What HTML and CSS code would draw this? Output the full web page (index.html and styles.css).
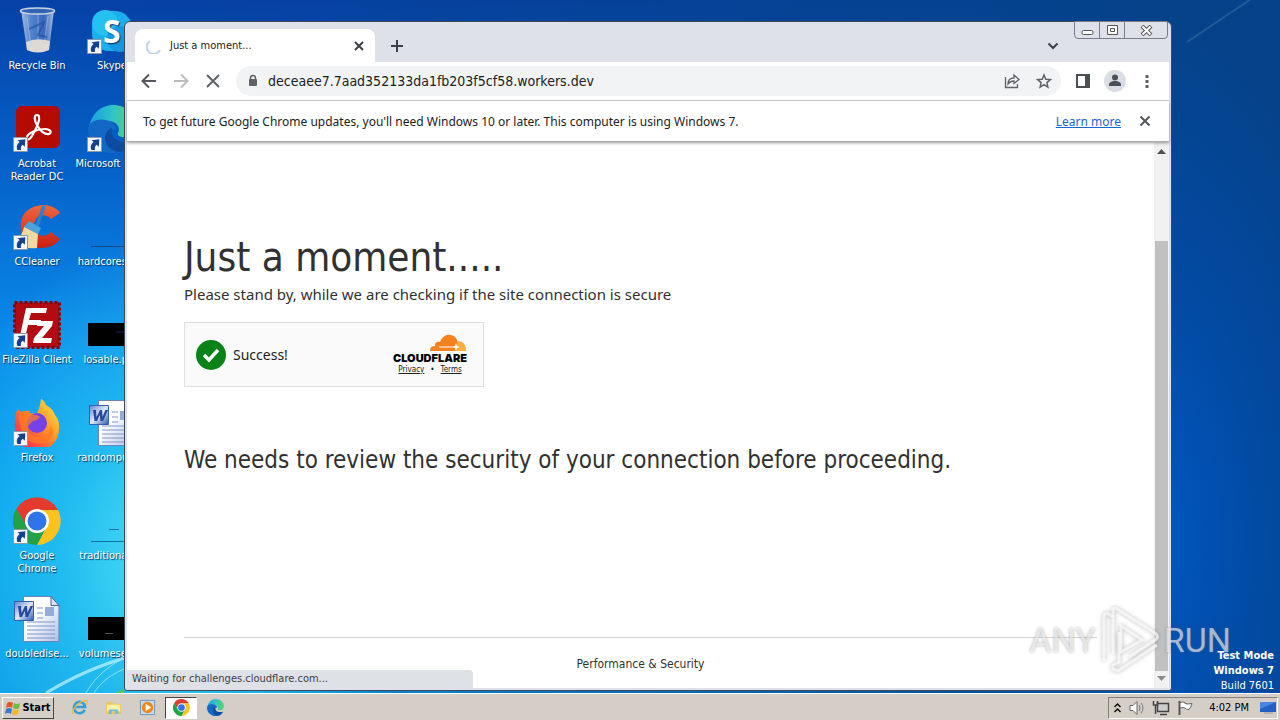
FILE: index.html
```
<!DOCTYPE html>
<html lang="en">
<head>
    <meta charset="UTF-8">
    <meta name="viewport" content="width=device-width, initial-scale=1.0">
    <title>Just a moment...</title>
    <link rel="stylesheet" href="styles.css">
</head>
<body>
    <svg width="0" height="0" class="defs" aria-hidden="true">
        <defs>
            <linearGradient id="bin-glass" x1="0" x2="1"><stop offset="0" stop-color="#b9cbe6"/><stop offset=".3" stop-color="#5c8ad0"/><stop offset=".7" stop-color="#3c6cc0"/><stop offset="1" stop-color="#bccbe2"/></linearGradient>
            <linearGradient id="page-fade" x1="0" y1="0" x2="1" y2="1"><stop offset=".4" stop-color="#fff"/><stop offset="1" stop-color="#aebde4"/></linearGradient>
            <linearGradient id="word-blue" x1="0" y1="0" x2="1" y2="1"><stop offset="0" stop-color="#5f86d2"/><stop offset=".5" stop-color="#dfe8fa"/><stop offset="1" stop-color="#3157ab"/></linearGradient>
            <linearGradient id="edge-top" x1="0" x2="1"><stop offset="0" stop-color="#1b9de0"/><stop offset=".5" stop-color="#2fc3c9"/><stop offset="1" stop-color="#5fd563"/></linearGradient>
            <linearGradient id="fox" x1="1" y1="0" x2="0" y2="1"><stop offset="0" stop-color="#fff04a"/><stop offset=".4" stop-color="#ff9a26"/><stop offset=".75" stop-color="#ff4146"/><stop offset="1" stop-color="#e31c8a"/></linearGradient>
            <linearGradient id="cc-red" x1="0" y1="0" x2="0" y2="1"><stop offset="0" stop-color="#f0663f"/><stop offset="1" stop-color="#c91f14"/></linearGradient>
            <symbol id="shortcut" viewBox="0 0 16 16"><path d="M.5.5h14v14H.5z" fill="#f2f5fa" stroke="#8d97a6"/><path d="M4.500 3.200l7.800-.9-.5 7.500-2-2C8 9 7.500 10.500 8 13H4.500C3 10 4 7 6.700 5z" fill="#15408e"/></symbol>
            <symbol id="chrome" viewBox="0 0 48 48"><path d="M24 13h21a24 24 0 0 0-41.800-1L14 30z" fill="#e33b2e"/><path d="M33.500 29.500L24 48a24 24 0 0 0 21-35H24z" fill="#fcc31e"/><path d="M14.500 29.500L3.200 12A24 24 0 0 0 24 48l9.500-18.500z" fill="#24a048"/><circle cx="24" cy="24" r="12" fill="#fff"/><circle cx="24" cy="24" r="9.500" fill="#2f74ea"/></symbol>
            <symbol id="edge" viewBox="0 0 48 48"><path d="M1 23C3 9 13 0 25 0c13 0 23 9 23 20 0 8-6 12-12 12-5 0-7-2-6-4 3-5-1-12-10-12S4 19 1 23z" fill="url(#edge-top)"/><path d="M0 25c0-8 9-12 18-10 7 1.500 11 6 11 10-5-2-10 2-10 8 0 8 8 13 15 14C18 53 0 42 0 25z" fill="#1268c4"/><path d="M17 33c0-5 3-9 7-10-2 7 3 14 13 14 4 0 7-1 9-2-4 8-10 12-15 12-8-1-14-7-14-14z" fill="#0c4ba0"/></symbol>
            <symbol id="word" viewBox="0 0 48 48"><path d="M10.500 1.500H38l8 9v36H10.500z" fill="url(#page-fade)" stroke="#6d83bb"/><path d="M38 1.500v9h8z" fill="#dbe5fa" stroke="#48619f"/><path d="M24 13h6M24 18h6M24 23h6M14 27h28M14 31h28M14 35h28M14 39h28M14 43h28" stroke="#7f96c9"/><path d="M32 12h9v9h-9z" fill="#96abd6"/><path d="M1.500 6.500h19v19h-19z" fill="url(#word-blue)" stroke="#385db1"/><path d="M5 11h3l.5 7 3.500-7h2l.5 7 3-7h2.500l-5 11h-2.500l-.7-6-2.800 6H6.500z" fill="#254a9c"/></symbol>
        </defs>
    </svg>

    <main class="desktop">
        <svg class="streaks" viewBox="0 0 200 100" aria-hidden="true">
            <path d="M46 100C76 82 100 72 140 60" stroke="#b9f3ff" stroke-width="3" opacity=".75"/>
            <path d="M86 100C94 86 104 76 128 62M94 100C100 90 110 82 124 76" stroke="#a5edfb" stroke-width="1" opacity=".8"/>
            <path d="M116 100l8-5v5z" fill="#54c660"/>
        </svg>
        <svg class="rays" viewBox="0 0 108 300" aria-hidden="true"><path d="M15 42L82-3" stroke="#8fb4d6" stroke-width="2" opacity=".2"/></svg>

        <div class="shortcuts">
            <a class="shortcut" href="#">
                <svg viewBox="0 0 48 48"><path d="M8 3l6 40q10 5 22 0l5-40z" fill="url(#bin-glass)" opacity=".9"/><path d="M13 35q11-5 24-1l-1 9q-11 5-22 0z" fill="#ded9d2"/><path d="M14 10l4 30M25 8v30M35 9l-4 30" stroke="#c4d8f2" opacity=".45"/><path d="M16 22l15-7-6 13 9 2" fill="none" stroke="#204c9f" stroke-width="2" opacity=".6"/><ellipse cx="24.500" cy="4" rx="17" ry="3" fill="#3164b8" stroke="#c9d3dd" stroke-width="1.500"/></svg>
                <span>Recycle Bin</span>
            </a>
            <a class="shortcut" href="#">
                <svg viewBox="0 0 48 48"><rect x="4" y="4" width="40" height="40" rx="17" fill="#1bb0ed"/><circle cx="17" cy="16" r="13" fill="#25c1f1"/><circle cx="32" cy="32" r="13" fill="#1598df"/><text x="15" y="36" class="skype-s">S</text></svg>
                <svg class="arrow"><use href="#shortcut"/></svg>
                <span>Skype</span>
            </a>
            <a class="shortcut" href="#">
                <svg viewBox="0 0 48 48"><rect x="3" y="1" width="44" height="42" rx="6" fill="#b30b00"/><path d="M24 10c-3 0-3 5 0 10 3 6 8 10 12 9 3-1 2-5-4-5-8 0-17 4-18 8-1 3 2 4 5-1 4-7 8-16 7-19 0-1-1-2-2-2z" fill="none" stroke="#fff" stroke-width="2.200"/></svg>
                <svg class="arrow"><use href="#shortcut"/></svg>
                <span>Acrobat Reader DC</span>
            </a>
            <a class="shortcut" href="#">
                <svg><use href="#edge"/></svg>
                <svg class="arrow"><use href="#shortcut"/></svg>
                <span>Microsoft Edge</span>
            </a>
            <a class="shortcut" href="#">
                <svg viewBox="0 0 48 48"><path d="M47 10C40-1 18-1 10 13c-7 15 2 32 18 32 9 0 16-4 19-9l-9-7c-6 7-17 4-17-6 0-11 11-14 17-7z" fill="url(#cc-red)"/><path d="M31 3l-7 20" stroke="#2f80c8" stroke-width="3.500"/><path d="M16 18l12 7-3 6-14-7z" fill="#47a4dc"/><path d="M11 24l14 7-1 14q-14 2-21-7 6-5 8-14z" fill="#f0d9a2"/></svg>
                <svg class="arrow"><use href="#shortcut"/></svg>
                <span>CCleaner</span>
            </a>
            <a class="shortcut" href="#">
                <svg viewBox="0 0 48 48"><path d="M3 43.500h45" stroke="#084a8b"/></svg>
                <span>hardcoreset...</span>
            </a>
            <a class="shortcut" href="#">
                <svg viewBox="0 0 48 48"><rect x="1.500" y="1.500" width="45" height="45" fill="#b20b12" stroke="#7e0710" stroke-width="3" stroke-dasharray="3 2"/><path d="M13 7h21l-1 5H18l-2 7h12l-1 5H15l-3 13H6.500z" fill="#fff"/><path d="M25 20h15l-1 5-10 12h10l-1 5H20l1-5 10-12h-7z" fill="#fff"/></svg>
                <svg class="arrow"><use href="#shortcut"/></svg>
                <span>FileZilla Client</span>
            </a>
            <a class="shortcut" href="#">
                <svg viewBox="0 0 48 48"><path d="M0 22h48v23H0z"/><path d="M28 31h12" stroke="#20205c"/></svg>
                <span>losable.png</span>
            </a>
            <a class="shortcut" href="#">
                <svg viewBox="0 0 48 48"><path d="M5 9q0 3 4 4 4-2 8-1-2 2 0 3 3-1 7-1 3-5 4-14 3 1 5 6 7 4 9 10 5 6 4 14a22 22 0 0 1-44 0Q1 16 5 9z" fill="url(#fox)"/><circle cx="24" cy="24" r="10" fill="#7542e5"/><path d="M6 13q9-2 15 3 5 0 6 2-2 3-7 4-5 4-5 6-1 8 9 10 12 1 14-11 5 8-3 15-9 6-20-1-8-8-9-22z" fill="#ff7b24" opacity=".75"/></svg>
                <svg class="arrow"><use href="#shortcut"/></svg>
                <span>Firefox</span>
            </a>
            <a class="shortcut" href="#">
                <svg><use href="#word"/></svg>
                <span>randomputs...</span>
            </a>
            <a class="shortcut" href="#">
                <svg><use href="#chrome"/></svg>
                <svg class="arrow"><use href="#shortcut"/></svg>
                <span>Google Chrome</span>
            </a>
            <a class="shortcut" href="#">
                <svg viewBox="0 0 48 48"><path d="M3 44.500h45M21 32.500h10" stroke="#126f9d"/></svg>
                <span>traditionals...</span>
            </a>
            <a class="shortcut" href="#">
                <svg><use href="#word"/></svg>
                <span>doubledise...</span>
            </a>
            <a class="shortcut" href="#">
                <svg viewBox="0 0 48 48"><path d="M0 22h48v23H0z"/><path d="M17 38.500h8" stroke="#555"/></svg>
                <span>volumesets...</span>
            </a>
        </div>

        <section class="window">
            <div class="window-buttons">
                <button aria-label="Minimize"><svg width="13" height="11"><rect x="1" y="5.500" width="11" height="4" rx="1.500" fill="#fff" stroke="#555"/></svg></button>
                <button aria-label="Maximize"><svg width="13" height="11"><path d="M1.500.5h10v9h-10zM4.500 3.500h4v3h-4z" fill="#fff" stroke="#555"/></svg></button>
                <button aria-label="Close"><svg width="13" height="11"><path d="M2 1l9 9M11 1l-9 9" stroke="#555" stroke-width="4"/><path d="M2.500 1.500l8 8M10.500 1.500l-8 8" stroke="#fff" stroke-width="2"/></svg></button>
            </div>

            <div class="tabs">
                <div class="tab">
                    <svg width="16" height="16"><path d="M4 3A7 7 0 1 0 14 12" fill="none" stroke="#c3d3ec" stroke-width="2"/></svg>
                    <span>Just a moment...</span>
                    <button aria-label="Close tab"><svg width="10" height="10"><path d="M1 1l8 8M9 1l-8 8" stroke="#3c4043" stroke-width="2"/></svg></button>
                </div>
                <button class="new-tab" aria-label="New tab"><svg width="12" height="12"><path d="M6 0v12M0 6h12" stroke="#3c4043" stroke-width="2"/></svg></button>
                <button class="tab-search" aria-label="Search tabs"><svg width="12" height="8"><path d="M1.500 1.500L6 6l4.500-4.500" fill="none" stroke="#3c4043" stroke-width="2"/></svg></button>
            </div>

            <div class="toolbar">
                <button aria-label="Back"><svg width="16" height="16"><path d="M15 8H2M8 1.500L1.500 8 8 14.500" fill="none" stroke="#54575b" stroke-width="2"/></svg></button>
                <button aria-label="Forward"><svg width="16" height="16"><path d="M1 8h13M8 1.500L14.500 8 8 14.500" fill="none" stroke="#babcbe" stroke-width="2"/></svg></button>
                <button aria-label="Stop"><svg width="16" height="16"><path d="M2 2l12 12M14 2L2 14" stroke="#5f6368" stroke-width="2"/></svg></button>
                <div class="omnibox">
                    <svg width="10" height="14"><path d="M2.500 6V4a2.500 2.500 0 0 1 5 0v2" fill="none" stroke="#5f6368" stroke-width="1.500"/><rect x="1" y="5" width="8" height="7" rx="1" fill="#5f6368"/></svg>
                    <input type="text" aria-label="Address" value="deceaee7.7aad352133da1fb203f5cf58.workers.dev">
                    <button aria-label="Share"><svg width="16" height="16"><path d="M1.500 4v10.500h12V11M4 11c0-4 2-6 6-6V2l5 4.500-5 4V8c-3 0-4.500 1-6 3z" fill="none" stroke="#5f6368" stroke-width="1.300"/></svg></button>
                    <button aria-label="Bookmark"><svg width="16" height="16"><path d="M8 2l1.800 4.200 4.600.4-3.500 3 1 4.500L8 11.700l-3.900 2.400 1-4.500-3.500-3 4.600-.4z" fill="none" stroke="#5f6368" stroke-width="1.500"/></svg></button>
                </div>
                <button aria-label="Side panel"><svg width="14" height="14"><path d="M1 1h12v12H1z" fill="none" stroke="#4b4e52" stroke-width="2"/><path d="M9 0h5v14H9z" fill="#4b4e52"/></svg></button>
                <button aria-label="Profile"><svg width="22" height="22"><circle cx="11" cy="11" r="11" fill="#dadde4"/><circle cx="11" cy="7.500" r="3" fill="#4a4f58"/><path d="M5 16v-1.500c0-2 3-3.500 6-3.500s6 1.500 6 3.500V16z" fill="#4a4f58"/></svg></button>
                <button aria-label="Menu"><svg width="4" height="14"><path d="M.5 1h3v3h-3zM.5 6h3v3h-3zM.5 11h3v3h-3z" fill="#5f6368"/></svg></button>
            </div>

            <div class="infobar">
                <p>To get future Google Chrome updates, you'll need Windows 10 or later. This computer is using Windows 7.</p>
                <a href="#">Learn more</a>
                <button aria-label="Dismiss"><svg width="12" height="12"><path d="M1.500 1.500l9 9M10.500 1.500l-9 9" stroke="#54575b" stroke-width="2"/></svg></button>
            </div>

            <div class="viewport">
                <div class="page">
                    <h1>Just a moment.....</h1>
                    <p class="lead">Please stand by, while we are checking if the site connection is secure</p>
                    <div class="challenge">
                        <svg width="30" height="30"><circle cx="15" cy="15" r="15" fill="#078318"/><path d="M8 15l5 5 9-10" fill="none" stroke="#fff" stroke-width="3.500"/></svg>
                        <span class="success">Success!</span>
                        <div class="brand">
                            <svg width="38" height="18" viewBox="0 0 38 18"><path d="M1 17q0-5 5-5 0-5 5-4c2-5 6-8 10-7 5 0 7 4 8 8l-2 8z" fill="#f6821f"/><path d="M29 7q8 0 8 10H26z" fill="#fbad41"/><path d="M10 13h18" stroke="#fff"/><path d="M27 9l1 3 3 1-3 1-1 3-1-3-2-1 2-1z" fill="#fff"/></svg>
                            <strong>CLOUDFLARE</strong>
                            <div class="terms"><a href="#">Privacy</a><span>•</span><a href="#">Terms</a></div>
                        </div>
                    </div>
                    <h2>We needs to review the security of your connection before proceeding.</h2>
                    <footer>Performance &amp; Security</footer>
                </div>
                <div class="scrollbar">
                    <svg width="9" height="5"><path d="M0 5l4.500-5L9 5z" fill="#505050"/></svg>
                    <div class="thumb"></div>
                    <svg width="9" height="5"><path d="M0 0l4.500 5L9 0z" fill="#8b8b8b"/></svg>
                </div>
                <div class="status">Waiting for challenges.cloudflare.com...</div>
            </div>
        </section>

        <div class="watermark">
            <span>ANY</span>
            <svg width="62" height="66" viewBox="0 0 62 66"><path d="M5 54V10q0-5 5-3l4 3v37"/><path d="M14 10V3q0-3 4-1l38 24q5 4 0 7L30 50"/><path d="M20 25v30l-6 3v4l5 2 39-26"/><path d="M22 19v26l21-12z"/></svg>
            <span>RUN</span>
        </div>
        <div class="build"><b>Test Mode</b><b>Windows 7</b><span>Build 7601</span></div>
    </main>

    <nav class="taskbar">
        <button class="start"><svg width="16" height="16"><path d="M2 3q3-2 6 0L7 8Q4 6 1 8z" fill="#e2552c"/><path d="M9 3q3 2 6 0l-1 5q-3 2-6 0z" fill="#75b843"/><path d="M1 9q3-2 6 0l-1 5q-3-2-6 0z" fill="#3a78cf"/><path d="M8 9q3 2 6 0l-1 5q-3 2-6 0z" fill="#f3b81f"/></svg>Start</button>
        <button class="task" aria-label="Internet Explorer"><svg viewBox="0 0 18 18"><path d="M14.500 11.500A6 6 0 1 1 15 8.500H4" fill="none" stroke="#359ed9" stroke-width="2.800"/><path d="M2 16C0 11 11 0 17 2q1 1-1 4" fill="none" stroke="#efbb35" stroke-width="1.300"/></svg></button>
        <button class="task" aria-label="Explorer"><svg viewBox="0 0 18 18"><path d="M1 3h6l2 2h8v11H1z" fill="#edc65b"/><path d="M2 6h14v7H2z" fill="#fff1a8"/><path d="M4 16v-5h10v5h-3v-3H7v3z" fill="#6dbbd9"/></svg></button>
        <button class="task" aria-label="Media Player"><svg viewBox="0 0 18 18"><path d="M1.500 1.500h15v15h-15z" fill="#c4dcf0" stroke="#6694bf"/><circle cx="9" cy="9" r="6" fill="#f28517"/><path d="M7 5l6 4-6 4z" fill="#fff"/></svg></button>
        <button class="task active" aria-label="Chrome"><svg><use href="#chrome"/></svg></button>
        <button class="task" aria-label="Edge"><svg><use href="#edge"/></svg></button>
        <div class="tray">
            <svg width="9" height="12"><path d="M1.500 5l3-3 3 3M1.500 10l3-3 3 3" fill="none" stroke="#111" stroke-width="1.500"/></svg>
            <svg width="16" height="16"><path d="M1 5.500h3l4-4v13l-4-4H1z" fill="#fff" stroke="#666"/><path d="M10 5q2 3 0 6M12 3q4 5 0 10" fill="none" stroke="#777"/></svg>
            <svg width="18" height="16"><path d="M5.500 3.500h11v8h-11z" fill="#ccc" stroke="#444" stroke-width="1.500"/><path d="M8 14.500h7M1.500 1v4h4V1M3.500 5v9" fill="none" stroke="#444" stroke-width="1.500"/></svg>
            <svg width="17" height="16"><path d="M2.500 1v14" stroke="#555" stroke-width="2"/><path d="M3 2.500q3-1 5 0v1q3 1 7 0-1 4-3 6-3 0-4-1.500-2-1-5 0z" fill="#fff" stroke="#666"/></svg>
            <time>4:02 PM</time>
            <svg width="16" height="14"><path d="M0 1h16v10H0z" fill="#245fc4"/><path d="M0 1h16L0 8z" fill="#4a86df"/><path d="M4 12h9" stroke="#999"/></svg>
        </div>
    </nav>
</body>
</html>
```

FILE: styles.css
```
* {
    box-sizing: border-box;
}

body {
    margin: 0;
    height: 100vh;
    overflow: hidden;
    display: flex;
    flex-direction: column;
    font-family: "DejaVu Sans Condensed", "Noto Sans", sans-serif;
    font-size: 11px;
    color: #222;
}

h1, h2, p {
    margin: 0;
    font-weight: normal;
}

button {
    display: flex;
    align-items: center;
    justify-content: center;
    padding: 0;
    border: none;
    background: none;
    font: inherit;
    color: inherit;
}

svg {
    display: block;
    flex-shrink: 0;
}

.defs {
    position: absolute;
}

/* desktop */
.desktop {
    position: relative;
    flex: 1;
    min-height: 0;
    overflow: hidden;
    background:
        radial-gradient(ellipse 240px 330px at 170px 560px, #4fe0f4 0%, rgba(45, 200, 242, 0.7) 45%, rgba(10, 150, 240, 0) 100%),
        radial-gradient(ellipse 240px 520px at 1140px 540px, #0059c4 0%, rgba(0, 80, 180, 0.6) 50%, rgba(0, 64, 140, 0) 100%),
        linear-gradient(to right, rgba(0, 66, 140, 0) 10%, #05428a 90%),
        linear-gradient(#0641a6 0%, #0563cb 25%, #0a8cec 50%, #04a0ee 75%, #0a98e6 100%);
}

.streaks {
    position: absolute;
    left: 0;
    bottom: 0;
    width: 200px;
    height: 100px;
    fill: none;
}

.rays {
    position: absolute;
    right: 0;
    top: 0;
    width: 108px;
    height: 300px;
    fill: none;
}

.shortcuts {
    display: grid;
    grid-template-columns: 74px 76px;
    grid-auto-rows: 98px;
    padding-top: 7px;
}

.shortcut {
    position: relative;
    display: flex;
    flex-direction: column;
    align-items: center;
    gap: 4px;
    line-height: 13px;
    text-align: center;
    text-decoration: none;
    color: #fff;
    text-shadow: 1px 1px 1px #06305f;
}

.shortcut svg {
    width: 48px;
    height: 48px;
}

.shortcut .arrow {
    position: absolute;
    left: 13px;
    top: 32px;
    width: 16px;
    height: 16px;
}

.skype-s {
    font: bold 32px "Open Sans", sans-serif;
    fill: #fff;
}

/* browser window */
.window {
    position: absolute;
    left: 124px;
    right: 108px;
    top: 21px;
    bottom: 2px;
    display: flex;
    flex-direction: column;
    padding: 0 2px 2px;
    border: 1px solid #3c4a57;
    border-radius: 6px 6px 3px 3px;
    background: #dee1e9;
}

.window-buttons {
    position: absolute;
    right: 3px;
    top: -1px;
    display: flex;
    border: 1px solid #777c86;
    border-radius: 0 0 4px 4px;
}

.window-buttons button {
    width: 25px;
    height: 16px;
    border-right: 1px solid #777c86;
}

.window-buttons button:last-child {
    width: 42px;
    border-right: none;
}

.tabs {
    display: flex;
    height: 40px;
    padding: 7px 0 0 8px;
}

.tab {
    display: flex;
    align-items: center;
    gap: 8px;
    width: 240px;
    padding: 0 11px;
    border-radius: 8px 8px 0 0;
    background: #fff;
}

.tab span {
    flex: 1;
}

.new-tab {
    width: 44px;
}

.tab-search {
    width: 24px;
    margin-left: auto;
    margin-right: 104px;
}

.toolbar {
    display: flex;
    align-items: center;
    height: 39px;
    padding: 0 6px;
    border-bottom: 1px solid #d5d6d9;
    background: #fff;
}

.toolbar > button {
    width: 32px;
    height: 32px;
}

.omnibox {
    flex: 1;
    display: flex;
    align-items: center;
    height: 30px;
    margin: 0 6px 0 7px;
    padding: 0 1px 0 12px;
    border-radius: 15px;
    background: #f1f3f4;
}

.omnibox input {
    flex: 1;
    min-width: 0;
    padding: 0 10px;
    border: none;
    outline: none;
    background: none;
    font: inherit;
    font-size: 14px;
    color: #202124;
}

.omnibox button {
    width: 32px;
    height: 28px;
}

.infobar {
    position: relative;
    display: flex;
    align-items: center;
    height: 41px;
    padding: 0 18px 0 16px;
    border-bottom: 1px solid #aaa;
    box-shadow: 0 1px 3px rgba(0, 0, 0, 0.4);
    background: #fff;
    font-family: "Noto Sans", sans-serif;
    font-size: 12px;
    z-index: 1;
}

.infobar p {
    flex: 1;
}

.infobar a {
    margin-right: 18px;
    color: #1967d2;
}

/* page */
.viewport {
    position: relative;
    flex: 1;
    min-height: 0;
    display: flex;
    background: #fff;
}

.page {
    flex: 1;
    display: flex;
    flex-direction: column;
    padding: 88px 57px 0;
    color: #313131;
}

h1 {
    font-size: 40px;
    line-height: 54px;
}

.lead {
    font-family: "Noto Sans", sans-serif;
    font-size: 15px;
    line-height: 20px;
}

.challenge {
    display: flex;
    align-items: center;
    gap: 7px;
    width: 300px;
    height: 65px;
    margin-top: 18px;
    padding: 0 16px 0 11px;
    border: 1px solid #e0e0e0;
    background: #fafafa;
    color: #222;
}

.success {
    flex: 1;
    font-family: "Noto Sans", sans-serif;
    font-size: 14px;
}

.brand {
    display: flex;
    flex-direction: column;
    align-items: flex-end;
}

.brand strong {
    font: 900 11px/12px Inter, sans-serif;
    color: #000;
}

.terms {
    display: flex;
    align-self: center;
    gap: 6px;
    font-size: 8px;
    line-height: 12px;
}

.terms a {
    color: #222;
}

h2 {
    margin-top: 56px;
    font-size: 24px;
    line-height: 34px;
}

footer {
    margin-top: auto;
    margin-bottom: 16px;
    padding-top: 18px;
    border-top: 1px solid #d5d5d5;
    font-size: 12px;
    line-height: 16px;
    text-align: center;
}

.scrollbar {
    display: flex;
    flex-direction: column;
    align-items: center;
    width: 15px;
    padding: 7px 0;
    background: #f1f1f1;
}

.thumb {
    flex: 1;
    width: 13px;
    margin: 87px 0 5px;
    background: #c1c1c1;
}

.status {
    position: absolute;
    left: 0;
    bottom: 0;
    width: 346px;
    padding: 0 5px;
    border-radius: 0 4px 0 0;
    background: #dee1e6;
    line-height: 18px;
    color: #3c4043;
}

.build {
    position: absolute;
    right: 6px;
    bottom: 0;
    display: flex;
    flex-direction: column;
    align-items: flex-end;
    line-height: 15px;
    color: #fff;
}

.watermark {
    position: absolute;
    right: 49px;
    bottom: 20px;
    display: flex;
    align-items: center;
    gap: 3px;
    font: 34px/34px "Roboto", sans-serif;
    color: rgba(255, 255, 255, 0.6);
    text-shadow: 0 0 3px rgba(90, 90, 90, 0.5);
}

.watermark svg {
    fill: none;
    stroke: rgba(255, 255, 255, 0.7);
    stroke-width: 3;
    filter: drop-shadow(0 0 2px rgba(90, 90, 90, 0.6));
}

/* taskbar */
.taskbar {
    display: flex;
    align-items: center;
    height: 27px;
    padding: 1px 2px 0 2px;
    border-top: 1px solid #fff;
    background: #d5cec7;
}

.start {
    gap: 1px;
    width: 52px;
    height: 22px;
    margin-right: 8px;
    border: 1px solid;
    border-color: #fff #444 #444 #fff;
    font-weight: bold;
    color: #000;
}

.task {
    width: 32px;
    height: 22px;
    margin: 0 1px;
    border: 1px solid transparent;
}

.task svg {
    width: 17px;
    height: 17px;
}

.task.active {
    border-color: #444 #fff #fff #444;
    background: #fff;
}

.tray {
    display: flex;
    align-items: center;
    gap: 7px;
    height: 22px;
    margin-left: auto;
    padding: 0 1px 0 4px;
    border: 1px solid;
    border-color: #858079 #fff #fff #858079;
    color: #000;
}

.tray time {
    margin: 0 4px 0 8px;
}
```
